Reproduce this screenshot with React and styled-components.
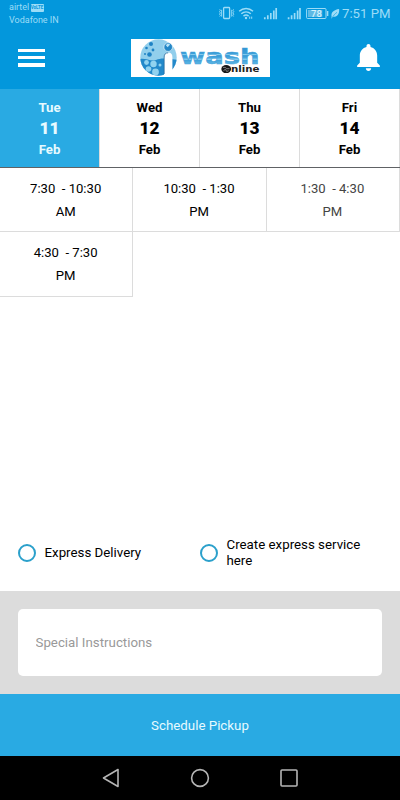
import React from 'react'
import styled, {createGlobalStyle} from 'styled-components'
import {IoMdNotifications} from 'react-icons/io'

const days = [
  {day: 'Tue', date: '11', month: 'Feb'},
  {day: 'Wed', date: '12', month: 'Feb'},
  {day: 'Thu', date: '13', month: 'Feb'},
  {day: 'Fri', date: '14', month: 'Feb'},
]

const slots = [
  {time: '7:30  - 10:30', half: 'AM'},
  {time: '10:30  - 1:30', half: 'PM'},
  {time: '1:30  - 4:30', half: 'PM', muted: true},
  {time: '4:30  - 7:30', half: 'PM'},
]

function StatusIcons() {
  return (
    <svg width="122" height="16" viewBox="0 0 122 16" fill="none" stroke="#9cdcf7">
      {/* vibrate */}
      <rect x="4.6" y="2.5" width="6" height="11" rx="0.8" strokeWidth="1.3" />
      <path d="M2.6 4.8v6.8M12.7 4.8v6.8M0.7 4.3l.7 1-.9 1.3.9 1.3-.9 1.3.9 1.3-.7 1M14.6 4.3l-.7 1 .9 1.3-.9 1.3.9 1.3-.9 1.3.7 1" strokeWidth="0.9" />
      {/* wifi */}
      <path d="M20.2 6.2c4-3.7 9.8-3.7 13.8 0M22.3 8.8c2.8-2.5 6.7-2.5 9.5 0M24.5 11.1c1.5-1.3 3.6-1.3 5.1 0" strokeWidth="1.5" />
      <circle cx="27" cy="13" r="1.2" fill="#9cdcf7" stroke="none" />
      <path d="M30.7 11.6v2.2M32.7 11.6v2.2" strokeWidth="1" />
      {/* signals */}
      <path d="M45.8 14.2v-2M48.8 14.2v-4M51.8 14.2V7.9M54.8 14.2V5.5M57.2 14.2V2.9" strokeWidth="1.7" />
      <path d="M69.6 14.2v-2M72.6 14.2v-4M75.6 14.2V7.9M78.6 14.2V5.5M81 14.2V2.9" strokeWidth="1.7" />
      {/* battery */}
      <rect x="87.6" y="3.5" width="19.4" height="10" rx="1" strokeWidth="1" />
      <rect x="89" y="5" width="14.3" height="7" fill="#5fb9e4" stroke="none" />
      <path d="M108.6 6v5" strokeWidth="1.5" />
      <text x="92" y="12" fontFamily="Roboto, sans-serif" fontSize="9.5" fontWeight="500" fill="#d5f3ff" stroke="none">78</text>
      {/* power saving leaf */}
      <path d="M112.6 11.7c-.9-4.2 2.2-7 7.5-7.7.5 4.6-1.5 8-6.3 8l-1.5 1.8z" fill="#9cdcf7" stroke="none" />
      <path d="M113.2 12.7c1.4-2.3 2.7-3.9 4.8-5.4" stroke="#0397dc" strokeWidth="0.6" />
    </svg>
  )
}

function Brand() {
  return (
    <svg width="139" height="38" viewBox="0 0 139 38">
      <defs>
        <clipPath id="ball"><circle cx="27.5" cy="18.5" r="18.2" /></clipPath>
        <linearGradient id="stripes" x1="0" y1="8" x2="0" y2="26" gradientUnits="userSpaceOnUse">
          <stop offset="0" stopColor="#2f92d2" />
          <stop offset="0.36" stopColor="#3c9fd9" />
          <stop offset="0.42" stopColor="#86cdef" />
          <stop offset="0.48" stopColor="#3498d5" />
          <stop offset="0.62" stopColor="#4cabe0" />
          <stop offset="0.68" stopColor="#96d5f2" />
          <stop offset="0.74" stopColor="#42a3db" />
          <stop offset="1" stopColor="#68bde7" />
        </linearGradient>
      </defs>
      <rect width="139" height="38" fill="#fff" />
      <g clipPath="url(#ball)">
        <rect x="9" width="38" height="38" fill="#92cfec" />
        <path d="M9 20c6-1 11 3 16 1s8-2 22 0v17H9z" fill="#2389ca" />
        <g fill="#1e82c5">
          <circle cx="20" cy="5" r="2" />
          <circle cx="15.5" cy="9" r="1.3" />
          <circle cx="22" cy="11" r="1.4" />
          <circle cx="18.5" cy="15.5" r="2.3" />
          <circle cx="14" cy="15" r="1" />
        </g>
        <g fill="#91d2ef">
          <circle cx="15.5" cy="23.5" r="2.4" />
          <circle cx="22.5" cy="25" r="3.2" />
          <circle cx="17.5" cy="30" r="2.8" />
          <circle cx="24.5" cy="33" r="3.4" />
          <circle cx="29" cy="26" r="1.5" />
        </g>
      </g>
      <path d="M33 38V18q0-4.5 4.2-4.5T41.4 18v12q0 4-3 6.5l-2.3 1.5z" fill="#fff" />
      <path d="M33.2 35V18q0-4.2 4-4.2" fill="none" stroke="#20679c" strokeWidth="0.8" />
      <circle cx="37.2" cy="8.1" r="4.3" fill="#2387c7" stroke="#fff" strokeWidth="0.6" />
      <path d="M34.8 6.2q2-2.2 4.3-.8l-2.5 2.8z" fill="#b8e4f7" />
      <BrandWord x="49" y="25.3" textLength="79.5" lengthAdjust="spacingAndGlyphs">wash</BrandWord>
      <ellipse cx="95.2" cy="30.1" rx="4.9" ry="4" fill="#171717" />
      <path d="M92 28.4h2.5l1 1.3h3M92.5 31.5l2-1.2 1.2 2.2 2-.8" fill="none" stroke="#999" strokeWidth="0.8" />
      <BrandSub x="100" y="33.2" textLength="28.5" lengthAdjust="spacingAndGlyphs">nline</BrandSub>
    </svg>
  )
}

export default function App() {
  return (
    <>
      <GlobalStyle />
      <Screen>
        <Header>
          <StatusBar>
            <Carrier>
              <div>airtel <Volte>VoLTE</Volte></div>
              <div>Vodafone IN</div>
            </Carrier>
            <StatusRight>
              <StatusIcons />
              <Clock>7:51 PM</Clock>
            </StatusRight>
          </StatusBar>
          <AppBar>
            <Burger aria-label="Menu">
              <span />
              <span />
              <span />
            </Burger>
            <Brand />
            <Bell aria-label="Notifications"><IoMdNotifications size={33} /></Bell>
          </AppBar>
        </Header>

        <Days>
          {days.map((d, i) => (
            <Day key={d.date} $active={i === 0}>
              <span>{d.day}</span>
              <strong>{d.date}</strong>
              <span>{d.month}</span>
            </Day>
          ))}
        </Days>

        <Slots>
          {slots.map((s) => (
            <Slot key={s.time} $muted={s.muted}>
              <span>{s.time}</span>
              <span>{s.half}</span>
            </Slot>
          ))}
        </Slots>

        <Options>
          <Option>
            <Radio />
            <span>Express Delivery</span>
          </Option>
          <Option>
            <Radio />
            <span>Create express service here</span>
          </Option>
        </Options>

        <Notes>
          <NotesInput placeholder="Special Instructions" />
        </Notes>
        <Submit>Schedule Pickup</Submit>

        <NavBar>
          <svg width="18" height="20" viewBox="0 0 18 20">
            <path d="M16 1.5v17L1.5 10z" />
          </svg>
          <svg width="20" height="20" viewBox="0 0 20 20">
            <circle cx="10" cy="10" r="8.4" />
          </svg>
          <svg width="18" height="20" viewBox="0 0 18 20">
            <rect x="1" y="2" width="16" height="16" rx="1" />
          </svg>
        </NavBar>
      </Screen>
    </>
  )
}

const GlobalStyle = createGlobalStyle`
  * {
    box-sizing: border-box;
  }
  body {
    margin: 0;
    font-family: Roboto, sans-serif;
    background: #fff;
  }
  button, textarea, input {
    font-family: inherit;
    border: none;
    padding: 0;
  }
`;
const Screen = styled.div`
  width: 400px;
  height: 800px;
  display: flex;
  flex-direction: column;
  overflow: hidden;
`;
const Header = styled.header`
  height: 89px;
  background-color: #0397dc;
`;
const StatusBar = styled.div`
  height: 28px;
  display: flex;
  justify-content: space-between;
  padding: 1px 9px 0;
  color: #9cdcf7;
`;
const Carrier = styled.div`
  font-size: 9px;
  line-height: 13px;
  white-space: nowrap;
`;
const Volte = styled.span`
  display: inline-block;
  width: 13px;
  height: 8px;
  line-height: 8px;
  margin-left: -1px;
  border-radius: 1px;
  background-color: #9cdcf7;
  color: #0397dc;
  font-size: 4.5px;
  font-weight: 700;
  text-align: center;
  vertical-align: 1px;
`;
const StatusRight = styled.div`
  display: flex;
  align-items: flex-start;
  padding-top: 4px;
`;
const Clock = styled.span`
  width: 49px;
  margin-left: 1px;
  font-size: 13.2px;
  line-height: 18px;
  white-space: nowrap;
`;
const AppBar = styled.div`
  height: 61px;
  display: flex;
  align-items: flex-start;
  padding: 11px 15px 0 17.5px;
`;
const Burger = styled.button`
  width: 27px;
  margin: 9.7px 86.5px 0 0;
  background: none;
  display: flex;
  flex-direction: column;
  gap: 4px;

  span {
    width: 27px;
    height: 3.4px;
    background-color: #fff;
  }
`;
const Bell = styled.button`
  height: 33px;
  margin: 2px 0 0 auto;
  background: none;
  color: #fff;
`;
const BrandWord = styled.text`
  font-family: "DejaVu Sans", sans-serif;
  font-size: 21.5px;
  font-weight: 700;
  fill: url(#stripes);
  stroke: #3f9fd8;
  stroke-width: 0.5px;
`;
const BrandSub = styled.text`
  font-family: "DejaVu Sans", sans-serif;
  font-size: 8.5px;
  font-weight: 700;
  fill: #222;
`;
const Days = styled.div`
  height: 79px;
  display: grid;
  grid-template-columns: repeat(4, 1fr);
  border-bottom: 1px solid #606265;
`;
const Day = styled.div`
  display: flex;
  flex-direction: column;
  align-items: center;
  padding-top: 8px;
  border-right: 1px solid #dcdcdc;
  background-color: ${({$active}) => ($active ? '#29aae3' : '#fff')};
  color: ${({$active}) => ($active ? '#e6faff' : '#000')};
  font-size: 13.2px;
  font-weight: 700;
  line-height: 21px;

  strong {
    font-size: 17.3px;
    line-height: 21px;
  }
`;
const Slots = styled.div`
  flex: 1;
  display: grid;
  grid-template-columns: repeat(3, 1fr);
  grid-template-rows: 64px 65px;
`;
const Slot = styled.div`
  display: flex;
  flex-direction: column;
  align-items: center;
  padding: 9px 1px 0 0;
  border-right: 1px solid #dcdcdc;
  border-bottom: 1px solid #dcdcdc;
  color: ${({$muted}) => ($muted ? '#444' : '#000')};
  font-size: 13.1px;
  line-height: 23px;
  white-space: pre;
`;
const Options = styled.div`
  height: 77px;
  display: grid;
  grid-template-columns: 182px 1fr;
  padding: 0 18px;
`;
const Option = styled.label`
  height: 77px;
  display: flex;
  align-items: center;
  gap: 8.5px;
  font-size: 13.3px;
  line-height: 16px;

  span {
    max-width: 145px;
  }
`;
const Radio = styled.i`
  flex: none;
  width: 18px;
  height: 18px;
  border: 2px solid #2ba0cb;
  border-radius: 50%;
`;
const Notes = styled.div`
  height: 103px;
  padding: 18px;
  background-color: #dcdcdc;
`;
const NotesInput = styled.input`
  display: block;
  width: 100%;
  height: 67px;
  padding: 0 17.5px;
  border-radius: 5px;
  background-color: #fff;
  font-size: 13.3px;
  outline: none;

  &::placeholder {
    color: #999;
    opacity: 1;
  }
`;
const Submit = styled.button`
  height: 62px;
  background-color: #29aae3;
  color: #e6faff;
  font-size: 13.3px;
`;
const NavBar = styled.nav`
  height: 44px;
  display: flex;
  justify-content: space-between;
  align-items: center;
  padding: 0 102px;
  background-color: #000;

  svg {
    fill: none;
    stroke: #b5b5b5;
    stroke-width: 1.6;
    stroke-linejoin: round;
  }
`;
